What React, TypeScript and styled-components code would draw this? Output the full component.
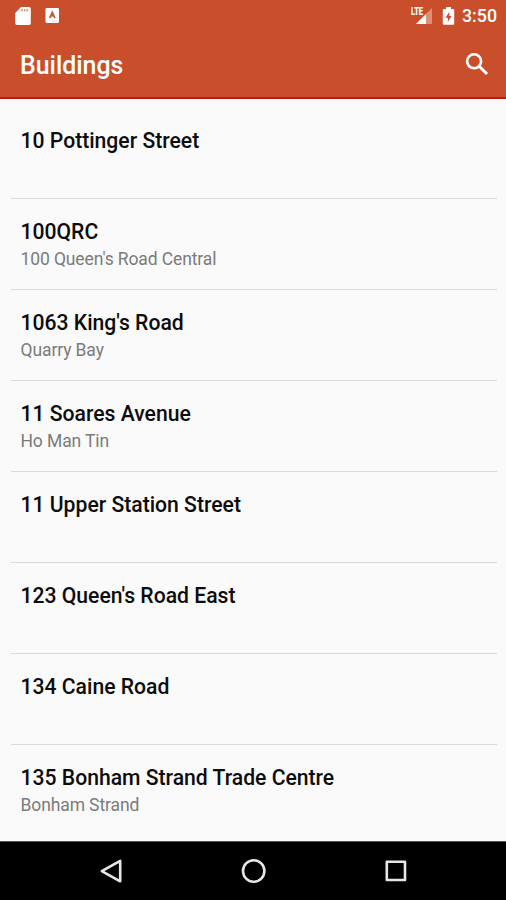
import React from "react";
import styled, { createGlobalStyle } from "styled-components";

const GlobalStyle = createGlobalStyle`
  *, *::before, *::after { box-sizing: border-box; }
  body { margin: 0; background: #fafafa; }
`;

const Screen = styled.div`
  display: flex;
  flex-direction: column;
  width: 506px;
  height: 900px;
  overflow: hidden;
  background: #fafafa;
  font-family: Roboto, "Liberation Sans", sans-serif;
`;

const Header = styled.header`
  flex: none;
  height: 99px;
  background: #c94f2c;
  border-bottom: 2px solid #bd1a17;
  color: #fff;
`;

const StatusBar = styled.div`
  display: flex;
  align-items: center;
  height: 31px;
  padding: 0 9px 0 14px;
`;

const StatusIcons = styled.div`
  display: flex;
  flex: 1;
  align-items: center;
  gap: 14px;
`;

const Signal = styled.svg`
  margin-right: 9px;
`;

const Clock = styled.span`
  width: 35px;
  margin-left: 7px;
  font-size: 17.8px;
  font-weight: 500;
  line-height: 31px;
  white-space: nowrap;
`;

const Toolbar = styled.div`
  display: flex;
  align-items: center;
  justify-content: space-between;
  height: 66px;
  padding: 4px 17px 0 20px;
`;

const ToolbarTitle = styled.h1`
  margin: 0;
  font-size: 24.9px;
  font-weight: 500;
  line-height: 32px;
`;

const SearchButton = styled.button`
  display: flex;
  margin-top: -5px;
  padding: 0;
  border: 0;
  background: none;
  color: inherit;
`;

const List = styled.ul`
  flex: 1;
  min-height: 0;
  margin: 0;
  padding: 9px 9px 0 11px;
  overflow: hidden;
  list-style: none;
`;

const Row = styled.li`
  height: 91px;
  padding: 19px 10px 0 9.5px;
  border-bottom: 1px solid #dadada;

  &:last-child {
    border-bottom: 0;
  }
`;

const Name = styled.div`
  color: #0c0c0c;
  font-size: 21.15px;
  font-weight: 500;
  line-height: 28px;
  white-space: nowrap;
`;

const Address = styled.div`
  color: #7b7b7b;
  font-size: 17.5px;
  letter-spacing: -0.11px;
  line-height: 26px;
  white-space: nowrap;
`;

const NavBar = styled.nav`
  display: flex;
  flex: none;
  align-items: center;
  justify-content: center;
  gap: 114px;
  height: 59px;
  padding-left: 1px;
  border-top: 1px solid #555;
  background: #000;
`;

const NavIcon = styled.svg`
  width: 28px;
  height: 28px;
  fill: none;
  stroke: #e6e6e6;
  stroke-width: 2.6;
  stroke-linejoin: round;
`;

const buildings: { name: string; address?: string }[] = [
  { name: "10 Pottinger Street" },
  { name: "100QRC", address: "100 Queen's Road Central" },
  { name: "1063 King's Road", address: "Quarry Bay" },
  { name: "11 Soares Avenue", address: "Ho Man Tin" },
  { name: "11 Upper Station Street" },
  { name: "123 Queen's Road East" },
  { name: "134 Caine Road" },
  { name: "135 Bonham Strand Trade Centre", address: "Bonham Strand" },
];

const SdCardIcon = () => (
  <svg width="17" height="20" viewBox="0 0 17 20">
    <path d="M7 1h8a1.8 1.8 0 0 1 1.8 1.8v14.5a1.8 1.8 0 0 1-1.8 1.8H3a1.8 1.8 0 0 1-1.8-1.8V7z" fill="#fff" />
    <path d="M8 3v2.6M10.6 3v2.6M13.2 3v2.6" stroke="#dc9078" strokeWidth="1.5" />
  </svg>
);

const AppIcon = () => (
  <svg width="15" height="17" viewBox="0 0 15 17">
    <rect x="0.5" y="1" width="13.5" height="15" rx="1.4" fill="#fff" />
    <path d="M4.6 11.2 7.3 5.2 10 11.2M6 9.5 7.3 7.6 8.6 9.5" fill="none" stroke="#c65a3b" strokeWidth="1.6" />
    <path d="M7 14.3h5" stroke="#efc7b9" strokeWidth="0.8" />
  </svg>
);

const LteSignalIcon = () => (
  <Signal width="22" height="20" viewBox="0 0 22 20">
    <path d="M21 2v16H5z" fill="#df8d75" />
    <path d="M15 8v10H5z" fill="#fff" />
    <path d="M0 0h12.5v10H0z" fill="#c94f2c" />
    <text x="0" y="9" fill="#fff" stroke="#fff" strokeWidth="0.2" fontSize="10" fontWeight="700" textLength="12" lengthAdjust="spacingAndGlyphs">
      LTE
    </text>
  </Signal>
);

const BatteryIcon = () => (
  <svg width="13" height="20" viewBox="0 0 13 20">
    <path d="M4 1h5v2h2.2a1 1 0 0 1 1 1v13.8a1 1 0 0 1-1 1H1.8a1 1 0 0 1-1-1V4a1 1 0 0 1 1-1H4z" fill="#fff" />
    <path d="M7.3 5.8 3.5 11.7h2.3v4.2l3.8-6H7.3z" fill="#c94f2c" />
  </svg>
);

export default function App() {
  return (
    <Screen>
      <GlobalStyle />
      <Header>
        <StatusBar>
          <StatusIcons>
            <SdCardIcon />
            <AppIcon />
          </StatusIcons>
          <LteSignalIcon />
          <BatteryIcon />
          <Clock>3:50</Clock>
        </StatusBar>
        <Toolbar>
          <ToolbarTitle>Buildings</ToolbarTitle>
          <SearchButton aria-label="Search">
            <svg width="24" height="24" viewBox="0 0 24 24" fill="none" stroke="#fff">
              <circle cx="9.1" cy="9.3" r="7" strokeWidth="2.6" />
              <path d="m14.2 14.2 7.8 7.8" strokeWidth="3" />
            </svg>
          </SearchButton>
        </Toolbar>
      </Header>
      <List>
        {buildings.map(({ name, address }) => (
          <Row key={name}>
            <Name>{name}</Name>
            {address && <Address>{address}</Address>}
          </Row>
        ))}
      </List>
      <NavBar>
        <NavIcon viewBox="0 0 28 28">
          <path d="M22.2 3.9v20.4L3.8 14.2z" />
        </NavIcon>
        <NavIcon viewBox="0 0 28 28">
          <circle cx="13.7" cy="14" r="10.7" />
        </NavIcon>
        <NavIcon viewBox="0 0 28 28">
          <rect x="4.8" y="4.8" width="18.2" height="18.2" />
        </NavIcon>
      </NavBar>
    </Screen>
  );
}
